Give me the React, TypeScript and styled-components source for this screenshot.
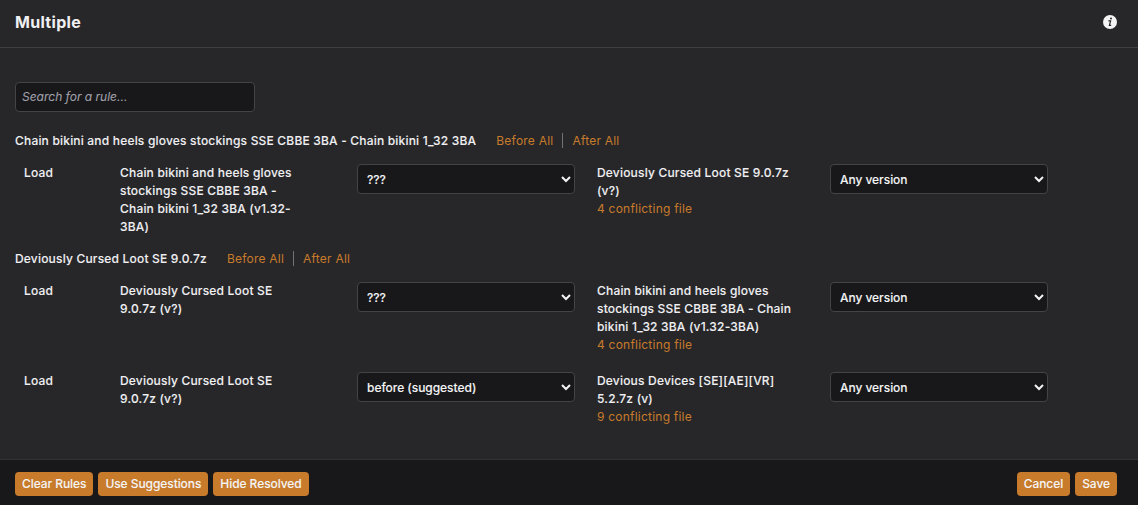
import React from 'react';
import styled, { createGlobalStyle } from 'styled-components';

const GlobalStyle = createGlobalStyle`
  * { box-sizing: border-box; }
  body {
    margin: 0;
    background: #27272a;
    color: #f0f0f2;
    font: 500 12px/18px Inter, "Liberation Sans", sans-serif;
    letter-spacing: 0.19px;
    -webkit-text-stroke: 0.08px;
    overflow: hidden;
  }
`;
const Dialog = styled.div`
  display: flex;
  flex-direction: column;
  height: 505px;
  background: #27272a;
`;
const Header = styled.header`
  display: flex;
  align-items: center;
  justify-content: space-between;
  height: 48px;
  padding: 0 21px 4px 15px;
  border-bottom: 1px solid #3f3f42;
`;
const Title = styled.h1`
  margin: 0;
  font-size: 16px;
  line-height: 24px;
  font-weight: 700;
  letter-spacing: 0.3px;
  -webkit-text-stroke: 0;
`;
const Body = styled.main`
  flex: 1;
  padding: 34px 15px 0;
`;
const Search = styled.input`
  display: block;
  width: 240px;
  height: 30px;
  margin-bottom: 20px;
  padding: 0 6px 2px;
  border: 1px solid #444447;
  border-radius: 4px;
  background: #18181b;
  color: #f4f4f5;
  font: italic 400 12px Inter, sans-serif;
  &::placeholder { color: #a1a1aa; opacity: 1; }
`;
const GroupHead = styled.div`
  display: flex;
  height: 18px;
  margin-bottom: 14px;
`;
const Actions = styled.span`
  display: flex;
  margin-left: 20px;
`;
const Divider = styled.i`
  width: 1px;
  height: 15px;
  margin: 1px 9px 0;
  background: #717179;
`;
const Link = styled.a`
  color: #c87b2a;
  font-weight: 400;
  letter-spacing: 0.22px;
  -webkit-text-stroke: 0;
`;
const Rule = styled.div<{ $h: number }>`
  display: grid;
  grid-template-columns: 96px 237px 240px 233px 218px;
  height: ${(p) => p.$h}px;
  padding-left: 9px;
`;
const Text = styled.div<{ $w: number }>`
  width: ${(p) => p.$w}px;
`;
const Select = styled.select`
  width: 218px;
  height: 30px;
  padding: 0 5px;
  border: 1px solid #444447;
  border-radius: 4px;
  background: #18181b;
  color: #f4f4f5;
  font: 500 12px Inter, sans-serif;
  letter-spacing: -0.04px;
`;
const Footer = styled.footer`
  display: flex;
  justify-content: space-between;
  height: 46px;
  padding: 12px 21px 0 15px;
  border-top: 1px solid #333335;
  background: #18181a;
`;
const Buttons = styled.div`
  display: flex;
  gap: 5px;
`;
const Button = styled.button`
  height: 24px;
  padding: 0 7px 2px;
  border: 0;
  border-radius: 4px;
  background: #c87b2a;
  color: #f4f4f5;
  font: 500 12px Inter, sans-serif;
  letter-spacing: -0.07px;
`;

const Group = ({ name }: { name: string }) => (
  <GroupHead>
    {name}
    <Actions>
      <Link>Before All</Link>
      <Divider />
      <Link>After All</Link>
    </Actions>
  </GroupHead>
);

type RuleProps = { source: string[]; order: string; target: string[]; count: number; height: number };
const RuleRow = ({ source, order, target, count, height }: RuleProps) => (
  <Rule $h={height}>
    <span>Load</span>
    <Text $w={200}>{source.map((l) => <div key={l}>{l}</div>)}</Text>
    <Select><option>{order}</option></Select>
    <Text $w={220}>
      {target.map((l) => <div key={l}>{l}</div>)}
      <Link>{count} conflicting file</Link>
    </Text>
    <Select><option>Any version</option></Select>
  </Rule>
);

export default function App() {
  return (
    <Dialog>
      <GlobalStyle />
      <Header>
        <Title>Multiple</Title>
        <svg width="14" height="14" viewBox="0 0 14 14">
          <circle cx="7" cy="7" r="7" fill="#f4f4f5" />
          <circle cx="8" cy="3.5" r="1" fill="#27272a" />
          <path d="M5.4 5.9h2.2l-1.2 4.4h1.8" fill="none" stroke="#27272a" strokeWidth="1.2" />
        </svg>
      </Header>
      <Body>
        <Search placeholder="Search for a rule..." />
        <Group name="Chain bikini and heels gloves stockings SSE CBBE 3BA - Chain bikini 1_32 3BA" />
        <RuleRow height={86} order="???" count={4}
          source={['Chain bikini and heels gloves', 'stockings SSE CBBE 3BA -', 'Chain bikini 1_32 3BA (v1.32-', '3BA)']}
          target={['Deviously Cursed Loot SE 9.0.7z', '(v?)']} />
        <Group name="Deviously Cursed Loot SE 9.0.7z" />
        <RuleRow height={90} order="???" count={4}
          source={['Deviously Cursed Loot SE', '9.0.7z (v?)']}
          target={['Chain bikini and heels gloves', 'stockings SSE CBBE 3BA - Chain', 'bikini 1_32 3BA (v1.32-3BA)']} />
        <RuleRow height={72} order="before (suggested)" count={9}
          source={['Deviously Cursed Loot SE', '9.0.7z (v?)']}
          target={['Devious Devices [SE][AE][VR]', '5.2.7z (v)']} />
      </Body>
      <Footer>
        <Buttons>
          <Button>Clear Rules</Button>
          <Button>Use Suggestions</Button>
          <Button>Hide Resolved</Button>
        </Buttons>
        <Buttons>
          <Button>Cancel</Button>
          <Button>Save</Button>
        </Buttons>
      </Footer>
    </Dialog>
  );
}
